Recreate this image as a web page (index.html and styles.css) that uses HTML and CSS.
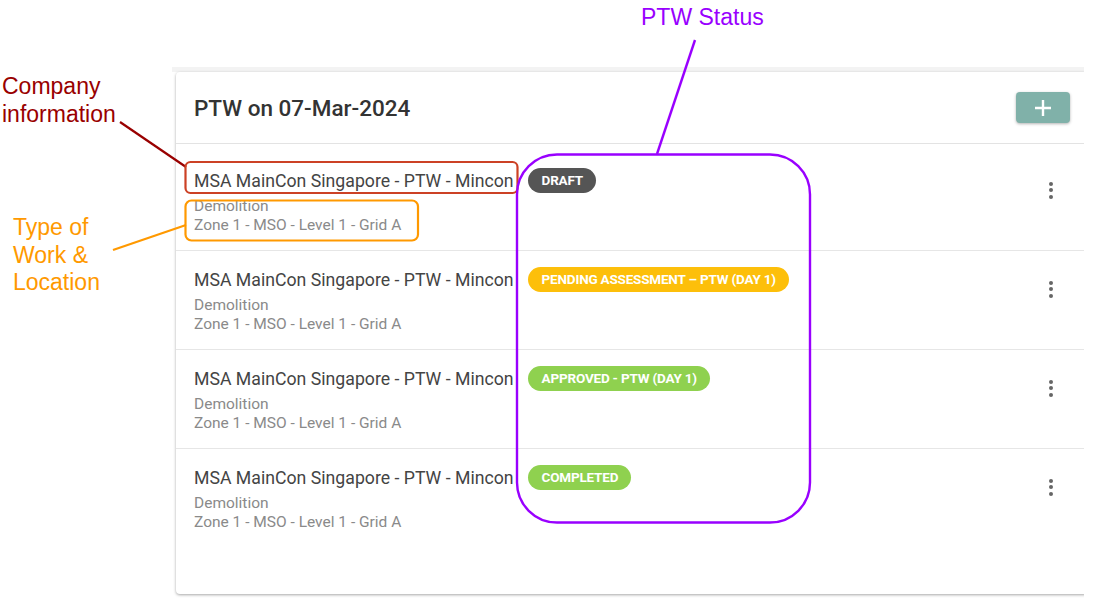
FILE: index.html
```html
<!DOCTYPE html>
<html lang="en">
<head>
    <meta charset="UTF-8">
    <meta name="viewport" content="width=device-width, initial-scale=1.0">
    <title>PTW List - annotated</title>
    <link rel="stylesheet" href="styles.css">
</head>
<body>
    <div class="screen">
        <div class="card">
            <div class="card-header">
                <h2 class="card-title">PTW on 07-Mar-2024</h2>
                <button class="add-btn" aria-label="Add PTW">
                    <svg width="18" height="18" viewBox="0 0 18 18"><path d="M9 1v16M1 9h16" stroke="#fff" stroke-width="2.4"/></svg>
                </button>
            </div>
            <div class="ptw-list">
                <div class="ptw-row">
                    <div class="ptw-info">
                        <div class="ptw-head">
                            <span class="ptw-company">MSA MainCon Singapore - PTW - Mincon</span>
                            <span class="badge badge-draft">Draft</span>
                        </div>
                        <div class="ptw-sub">Demolition</div>
                        <div class="ptw-sub">Zone 1 - MSO - Level 1 - Grid A</div>
                    </div>
                    <button class="kebab" aria-label="More"><i></i><i></i><i></i></button>
                </div>
                <div class="ptw-row">
                    <div class="ptw-info">
                        <div class="ptw-head">
                            <span class="ptw-company">MSA MainCon Singapore - PTW - Mincon</span>
                            <span class="badge badge-pending">Pending Assessment – PTW (Day 1)</span>
                        </div>
                        <div class="ptw-sub">Demolition</div>
                        <div class="ptw-sub">Zone 1 - MSO - Level 1 - Grid A</div>
                    </div>
                    <button class="kebab" aria-label="More"><i></i><i></i><i></i></button>
                </div>
                <div class="ptw-row">
                    <div class="ptw-info">
                        <div class="ptw-head">
                            <span class="ptw-company">MSA MainCon Singapore - PTW - Mincon</span>
                            <span class="badge badge-green">Approved - PTW (Day 1)</span>
                        </div>
                        <div class="ptw-sub">Demolition</div>
                        <div class="ptw-sub">Zone 1 - MSO - Level 1 - Grid A</div>
                    </div>
                    <button class="kebab" aria-label="More"><i></i><i></i><i></i></button>
                </div>
                <div class="ptw-row">
                    <div class="ptw-info">
                        <div class="ptw-head">
                            <span class="ptw-company">MSA MainCon Singapore - PTW - Mincon</span>
                            <span class="badge badge-green">Completed</span>
                        </div>
                        <div class="ptw-sub">Demolition</div>
                        <div class="ptw-sub">Zone 1 - MSO - Level 1 - Grid A</div>
                    </div>
                    <button class="kebab" aria-label="More"><i></i><i></i><i></i></button>
                </div>
            </div>
        </div>
    </div>

    <!-- annotation layer -->
    <svg class="marks" width="1118" height="611" viewBox="0 0 1118 611">
        <line x1="120" y1="122" x2="186" y2="167" stroke="#990000" stroke-width="2.2"/>
        <rect x="185.5" y="162" width="332" height="31" rx="5" fill="none" stroke="#cc4125" stroke-width="2.2"/>
        <line x1="113" y1="250" x2="186" y2="225" stroke="#ff9900" stroke-width="2.2"/>
        <rect x="185.5" y="200.5" width="232.5" height="40" rx="6" fill="none" stroke="#ff9900" stroke-width="2.2"/>
        <line x1="695" y1="40" x2="657" y2="154" stroke="#9900ff" stroke-width="2.4"/>
        <rect x="517" y="154.5" width="293" height="368" rx="40" fill="none" stroke="#9900ff" stroke-width="2.4"/>
    </svg>
    <div class="note note-company">Company<br>information</div>
    <div class="note note-work">Type of<br>Work &amp;<br>Location</div>
    <div class="note note-status">PTW Status</div>
</body>
</html>
```

FILE: styles.css
```css
body {
    margin: 0;
    background: #fff;
    font-family: Roboto, 'Noto Sans', sans-serif;
    width: 1118px;
    height: 611px;
    position: relative;
    overflow: hidden;
}
.screen {
    margin: 67px 0 0 172px;
    width: 912px;
    height: 540px;
    padding: 5px 0 0 4px;
    box-sizing: border-box;
    overflow: hidden;
    background: linear-gradient(#f3f3f3 5px, #fff 5px);
}
.card {
    width: 912px;
    height: 522px;
    background: #fff;
    border-radius: 4px;
    box-shadow: 0 1px 3px rgba(0, 0, 0, 0.35);
}
.card-header {
    height: 71px;
    padding: 0 18px;
    display: flex;
    align-items: center;
    justify-content: space-between;
    border-bottom: 1px solid #e3e3e3;
}
.card-title {
    margin: 0;
    font-size: 22.5px;
    font-weight: 500;
    color: #333;
}
.add-btn {
    width: 54px;
    height: 31px;
    border: none;
    border-radius: 4px;
    background: #80b1a9;
    box-shadow: 0 1px 3px rgba(0, 0, 0, 0.3);
    display: flex;
    align-items: center;
    justify-content: center;
    padding: 0;
}
.ptw-list {
    padding-top: 8px;
}
.ptw-row {
    height: 99px;
    padding: 16px 18px 0;
    box-sizing: border-box;
    display: flex;
    align-items: flex-start;
    border-bottom: 1px solid #e6e6e6;
}
.ptw-row:last-child {
    border-bottom: none;
}
.ptw-head {
    display: flex;
    align-items: center;
    gap: 14px;
    height: 25px;
}
.ptw-company {
    font-size: 17.7px;
    color: #444;
}
.ptw-sub {
    font-size: 15.5px;
    line-height: 18.5px;
    color: #8a8a8a;
}
.ptw-head + .ptw-sub {
    margin-top: 4px;
}
.badge {
    height: 25px;
    line-height: 25px;
    padding: 0 13px 0 14px;
    border-radius: 13px;
    color: #fff;
    font-size: 13.5px;
    font-weight: 700;
    text-transform: uppercase;
    letter-spacing: -0.2px;
    white-space: nowrap;
}
.badge-draft { background: #555; }
.badge-pending { background: #fdbf0a; }
.badge-green { background: #8fd14f; }
.kebab {
    margin: 10px 7px 0 auto;
    width: 24px;
    height: 24px;
    border: none;
    background: none;
    padding: 0;
    display: flex;
    flex-direction: column;
    align-items: center;
    justify-content: center;
    gap: 2.5px;
}
.kebab i {
    width: 4px;
    height: 4px;
    border-radius: 50%;
    background: #666;
}
.marks {
    position: absolute;
    left: 0;
    top: 0;
    pointer-events: none;
}
.note {
    position: absolute;
    font-family: 'Liberation Sans', Arial, sans-serif;
    font-size: 23px;
    line-height: 27.5px;
}
.note-company {
    left: 2px;
    top: 73px;
    color: #990000;
}
.note-work {
    left: 13px;
    top: 214px;
    color: #ff9900;
}
.note-status {
    left: 641px;
    top: 4px;
    color: #9900ff;
}
```
